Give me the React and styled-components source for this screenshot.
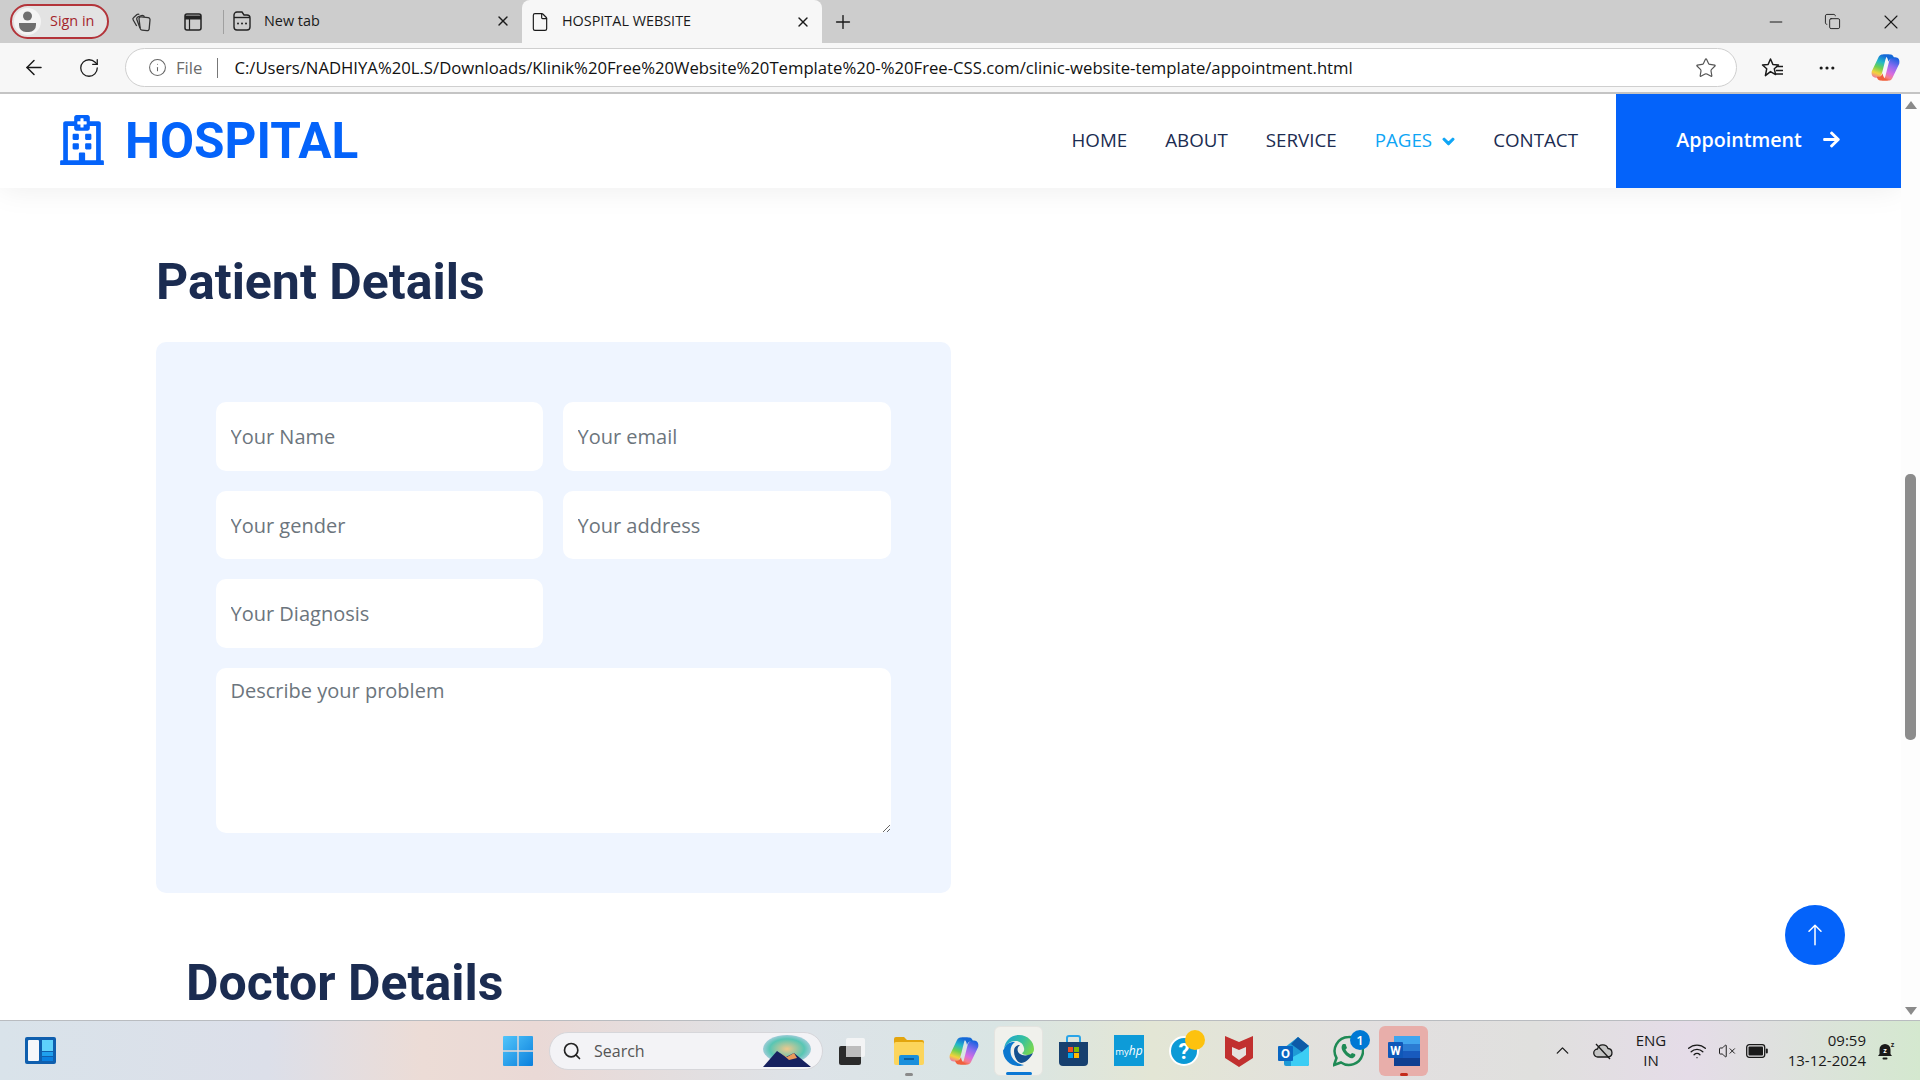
import React from "react";
import styled, { createGlobalStyle } from "styled-components";
import {
  ArrowLeft,
  ChevronUp,
  Info,
  Minus,
  MoreHorizontal,
  Plus,
  RotateCw,
  Search,
  Star,
  VolumeX,
  Wifi,
  X,
  Copy,
  File,
} from "lucide-react";
import { FaArrowRight, FaChevronDown, FaRegHospital } from "react-icons/fa";
import { BsArrowUp } from "react-icons/bs";

const GlobalStyle = createGlobalStyle`
  html, body {
    margin: 0;
    padding: 0;
    height: 100%;
    overflow: hidden;
    background: #fff;
  }
  * { box-sizing: border-box; }
`;

const Screen = styled.div`
  width: 1920px;
  height: 1080px;
  display: flex;
  flex-direction: column;
  overflow: hidden;
  font-family: "Open Sans", sans-serif;
`;

/* browser chrome */
const TabStrip = styled.div`
  height: 43px;
  flex: none;
  background: #cdcdcd;
  display: flex;
  align-items: center;
  padding-left: 10px;
  color: #1a1a1a;
`;

const SignIn = styled.div`
  width: 99px;
  height: 35px;
  flex: none;
  border: 2px solid #b3343a;
  border-radius: 18px;
  background: #e3e3e3;
  display: flex;
  align-items: center;
  gap: 9px;
  padding: 0 0 0 2px;
  color: #a4262c;
  font-size: 14.4px;
  line-height: 1;
`;

const Avatar = styled.span`
  width: 27px;
  height: 27px;
  border-radius: 50%;
  background: #f4f4f4;
  display: flex;
  align-items: center;
  justify-content: center;
`;

const StripButton = styled.span`
  width: 42px;
  flex: none;
  display: flex;
  justify-content: center;
  margin-left: ${(p) => p.$gap || 0}px;
`;

const Divider = styled.span`
  width: 1px;
  height: 24px;
  flex: none;
  background: #a0a0a0;
  margin-left: 9px;
`;

const Tab = styled.div`
  height: ${(p) => (p.$active ? "43px" : "34px")};
  flex: none;
  width: ${(p) => (p.$active ? "300px" : "298px")};
  align-self: flex-end;
  margin-bottom: ${(p) => (p.$active ? "0" : "5px")};
  background: ${(p) => (p.$active ? "#f7f7f7" : "transparent")};
  border-radius: 8px 8px 0 0;
  display: flex;
  align-items: center;
  padding: 0 11px 0 ${(p) => (p.$active ? "8px" : "9px")};
  gap: ${(p) => (p.$active ? "12px" : "13px")};
  font-size: 14.4px;
  color: #1a1a1a;
`;

const TabTitle = styled.span`
  flex: 1;
  white-space: nowrap;
  position: relative;
  top: -1px;
`;

const WindowControls = styled.div`
  margin-left: auto;
  display: flex;
  align-items: center;
  gap: 38px;
  padding-right: 17px;
`;

const Toolbar = styled.div`
  height: 51px;
  flex: none;
  background: #f7f7f7;
  border-bottom: 2px solid #c4c4c4;
  display: flex;
  align-items: center;
  padding-left: 22px;
  color: #1a1a1a;
`;

const ToolButton = styled.span`
  flex: none;
  width: ${(p) => p.$w || 24}px;
  margin: 0 ${(p) => p.$mr || 0}px 0 ${(p) => p.$ml || 0}px;
  display: flex;
  justify-content: center;
`;

const AddressBar = styled.div`
  width: 1612px;
  height: 39px;
  flex: none;
  background: #fff;
  border: 1px solid #cfcfcf;
  border-radius: 20px;
  display: flex;
  align-items: center;
  padding: 0 19px 0 22px;
  font-size: 16.7px;
`;

const FileLabel = styled.span`
  color: #6b6b6b;
  margin-left: 9px;
`;

const AddressSep = styled.span`
  width: 1px;
  height: 20px;
  background: #777;
  margin: 0 16px 0 15px;
`;

const Url = styled.span`
  flex: 1;
  white-space: nowrap;
  color: #111;
`;

/* site */
const Viewport = styled.div`
  flex: 1;
  min-height: 0;
  display: flex;
  position: relative;
  background: #fff;
`;

const Page = styled.main`
  flex: 1;
  min-width: 0;
  overflow: hidden;
`;

const Navbar = styled.nav`
  height: 94px;
  display: flex;
  align-items: center;
  background: #fff;
  box-shadow: 0 0 30px rgba(0, 0, 0, 0.08);
  padding-left: 57px;
`;

const Brand = styled.a`
  display: flex;
  align-items: center;
  gap: 18px;
  color: #0463fa;
  font-family: Roboto, sans-serif;
  font-weight: 700;
  font-size: 49.5px;
  line-height: 1;
  margin-right: auto;
  padding-top: 1px;
`;

const BrandMark = styled(FaRegHospital)`
  position: relative;
  top: -2px;
`;

const NavLinks = styled.div`
  display: flex;
  align-items: center;
  gap: 38px;
  margin-right: 38px;
  padding-bottom: 3px;
`;

const NavLink = styled.a`
  display: flex;
  align-items: center;
  gap: 10px;
  font-size: 18.75px;
  font-weight: 500;
  color: ${(p) => (p.$active ? "#0ea5f5" : "#1b2c51")};
`;

const Chevron = styled(FaChevronDown)`
  position: relative;
  top: 2px;
  stroke: currentColor;
  stroke-width: 40px;
`;

const AppointmentButton = styled.a`
  width: 285px;
  height: 94px;
  flex: none;
  background: #0463fa;
  color: #fff;
  font-size: 19.7px;
  font-weight: 600;
  display: flex;
  align-items: center;
  justify-content: center;
  gap: 20px;
  padding-bottom: 4px;
`;

const Content = styled.div`
  padding: 64px 0 0 156px;
`;

const Heading = styled.h1`
  margin: ${(p) => (p.$doctor ? "60px 0 0 30px" : "0 0 30px")};
  color: #1b2c51;
  font-family: Roboto, sans-serif;
  font-weight: 700;
  font-size: 50px;
  line-height: 60px;
`;

const FormPanel = styled.form`
  width: 795px;
  padding: 60px;
  background: #eff5ff;
  border-radius: 10px;
`;

const FieldGrid = styled.div`
  display: grid;
  grid-template-columns: 327px 1fr;
  gap: 20px;
`;

const Field = styled.input`
  width: 100%;
  height: 68.7px;
  border: 0;
  outline: 0;
  background: #fff;
  border-radius: 10px;
  padding: 0 14.5px;
  font-family: "Open Sans", sans-serif;
  font-size: 20px;
  color: #6c757d;
  &::placeholder { color: #6c757d; opacity: 1; }
`;

const Problem = styled.textarea`
  display: block;
  grid-column: 1 / 3;
  width: 100%;
  height: 165px;
  border: 0;
  outline: 0;
  background: #fff;
  border-radius: 10px;
  padding: 8px 14.5px;
  resize: vertical;
  font-family: "Open Sans", sans-serif;
  font-size: 20px;
  line-height: 30px;
  &::placeholder { color: #6c757d; opacity: 1; }
`;

const BackToTop = styled.a`
  position: absolute;
  left: 1785px;
  top: 811px;
  width: 60px;
  height: 60px;
  border-radius: 50%;
  background: #0463fa;
  color: #fff;
  display: flex;
  align-items: center;
  justify-content: center;
`;

const Scrollbar = styled.div`
  width: 19px;
  flex: none;
  background: #fdfdfd;
  display: flex;
  flex-direction: column;
  align-items: center;
  padding: 7px 0 5px;
`;

const ScrollArrow = styled.span`
  width: 0;
  height: 0;
  border-left: 6px solid transparent;
  border-right: 6px solid transparent;
  ${(p) => (p.$down ? "border-top" : "border-bottom")}: 8px solid #8a8a8a;
`;

const ScrollThumb = styled.span`
  width: 11px;
  height: 266px;
  border-radius: 5px;
  background: #8c8c8c;
  margin: 365px 0 auto;
`;

/* taskbar */
const Taskbar = styled.footer`
  height: 60px;
  flex: none;
  border-top: 1px solid #b9bcc0;
  background: linear-gradient(90deg, #d9e3ea 0%, #dcdfe9 14%, #ecdcd6 22%, #ead9d6 28%, #dde3e8 42%, #d9e5e4 52%, #e3e6d5 60%, #e2dfe0 72%, #e0e0de 80%, #e5dce8 88%, #d4e8cf 100%);
  display: flex;
  align-items: center;
  color: #1a1a1a;
`;

const WidgetSlot = styled.div`
  width: 490px;
  flex: none;
  padding-left: 25px;
  display: flex;
`;

const AppSlot = styled.div`
  width: ${(p) => p.$w || 55}px;
  height: 50px;
  flex: none;
  margin: 0 ${(p) => p.$inset || 0}px;
  position: relative;
  display: flex;
  align-items: center;
  justify-content: center;
  border-radius: 6px;
  background: ${(p) => p.$bg || "transparent"};
  border: ${(p) => (p.$framed ? "1px solid #e4e4e0" : "0")};
`;

const RunDot = styled.span`
  position: absolute;
  bottom: 0;
  left: 50%;
  transform: translateX(-50%);
  width: ${(p) => p.$w || 8}px;
  height: 3px;
  border-radius: 2px;
  background: ${(p) => p.$color};
`;

const SearchBox = styled.div`
  width: 274px;
  height: 38px;
  flex: none;
  margin: 0 0 0 4px;
  background: #f3f3f6;
  border: 1px solid #d6d6da;
  border-radius: 19px;
  display: flex;
  align-items: center;
  gap: 12px;
  padding: 0 9px 0 12px;
  font-size: 16px;
  color: #555;
`;

const SearchLabel = styled.span`
  flex: 1;
`;

const Badge = styled.span`
  position: absolute;
  top: 4px;
  right: 6px;
  width: 20px;
  height: 20px;
  border-radius: 50%;
  background: #0078d4;
  color: #fff;
  font-size: 13px;
  font-weight: 600;
  display: flex;
  align-items: center;
  justify-content: center;
`;

const Tray = styled.div`
  flex: 1;
  display: flex;
  align-items: center;
  font-size: 15px;
  line-height: 20px;
  padding-left: 116px;
`;

const TrayItem = styled.span`
  flex: none;
  width: ${(p) => p.$w}px;
  display: flex;
  justify-content: center;
  text-align: center;
`;

const Lang = styled.span`
  width: 44px;
  flex: none;
  text-align: center;
  margin-right: 9px;
  padding-bottom: 2px;
`;

const Clock = styled.span`
  width: 94px;
  flex: none;
  text-align: right;
  padding-bottom: 2px;
  white-space: nowrap;
`;

/* drawn icons */
const WidgetsIcon = () => (
  <svg width="31" height="27" viewBox="0 0 31 27">
    <rect width="31" height="27" rx="2" fill="#0f5fae" />
    <rect x="3" y="3" width="11" height="21" rx="1" fill="#f5f7fa" />
    <rect x="17" y="3" width="11" height="11" fill="#5ed1fb" />
    <rect x="17" y="15" width="11" height="4" fill="#1fa0ee" />
    <rect x="17" y="20" width="11" height="4" fill="#0a80e0" />
  </svg>
);

const WindowsIcon = () => (
  <svg width="30" height="30" viewBox="0 0 30 30">
    <defs>
      <linearGradient id="winA" x1="0" y1="0" x2="1" y2="1">
        <stop offset="0" stopColor="#52c5fa" />
        <stop offset="1" stopColor="#0a7fdc" />
      </linearGradient>
    </defs>
    <path d="M0 1a1 1 0 0 1 1-1h13.3v14.3H0zM15.7 0H29a1 1 0 0 1 1 1v13.3H15.7zM0 15.7h14.3V30H1a1 1 0 0 1-1-1zM15.7 15.7H30V29a1 1 0 0 1-1 1H15.7z" fill="url(#winA)" />
  </svg>
);

const SnipIcon = () => (
  <svg width="26" height="28" viewBox="0 0 26 28">
    <rect x="0" y="9" width="22" height="19" rx="2" fill="#2b2b2b" />
    <rect x="7" y="1" width="19" height="19" rx="2" fill="#f7f7f7" opacity="0.85" />
    <rect x="7" y="9" width="15" height="11" fill="#bdbdbd" />
  </svg>
);

const ExplorerIcon = () => (
  <svg width="30" height="29" viewBox="0 0 30 29">
    <path d="M0 3a2 2 0 0 1 2-2h8l3 3h15a2 2 0 0 1 2 2v3H0z" fill="#e3a50e" />
    <rect y="6" width="30" height="23" rx="2" fill="#fcd55c" />
    <path d="M5 21a2 2 0 0 1 2-2h16a2 2 0 0 1 2 2v8H5z" fill="#1a8fdc" />
    <rect x="10" y="22" width="10" height="2" fill="#0c5f9e" />
  </svg>
);

const CopilotIcon = ({ id, size = 30 }) => (
  <svg width={size} height={size} viewBox="0 0 30 29">
    <defs>
      <linearGradient id={`${id}a`} x1="0.5" y1="0" x2="0.2" y2="1">
        <stop offset="0" stopColor="#1468d8" />
        <stop offset="0.3" stopColor="#22b8c8" />
        <stop offset="0.55" stopColor="#6ed050" />
        <stop offset="0.8" stopColor="#f4d33c" />
        <stop offset="1" stopColor="#ee7aa0" />
      </linearGradient>
      <linearGradient id={`${id}b`} x1="0.7" y1="0" x2="0.3" y2="1">
        <stop offset="0" stopColor="#1b62e0" />
        <stop offset="0.35" stopColor="#8a6cf0" />
        <stop offset="0.65" stopColor="#d86ce0" />
        <stop offset="0.85" stopColor="#f5808c" />
        <stop offset="1" stopColor="#f05a30" />
      </linearGradient>
    </defs>
    <path d="M8 3.5C9 1.5 10.5 1 12.5 1H21c-3.5 0-5 1.5-6 5l-3.5 14c-.7 3-2.5 5-5.500 5H5c-3.500 0-5-3-4.200-6.500z" fill={`url(#${id}a)`} />
    <path d="M22 25.500c-1 2-2.500 2.500-4.500 2.500H9c3.500 0 5-1.500 6-5l3.500-14C19.200 6 21 4 24 4h1c3.500 0 5 3 4.200 6.500z" fill={`url(#${id}b)`} />
    <path d="M12 1h8c2.500 0 3.500 2 4 4-3-.7-5 .5-6 3.500C17.500 4 15 2 12 1z" fill="#1468d8" />
    <path d="M18 28h-8c-2.500 0-3.500-2-4-4 3 .7 5-.5 6-3.500.5 4.500 3 6.500 6 7.500z" fill="#f0603c" />
  </svg>
);

const EdgeIcon = () => (
  <svg width="31" height="31" viewBox="0 0 31 31">
    <defs>
      <linearGradient id="edgeA" x1="0" y1="0.2" x2="1" y2="0.6">
        <stop offset="0" stopColor="#1ca4d0" />
        <stop offset="0.55" stopColor="#35c0a0" />
        <stop offset="1" stopColor="#78d850" />
      </linearGradient>
    </defs>
    <path d="M1 14C2 6 8 0 16 0c9 0 15 7 15 14 0 4-3 6-7 6-3 0-4.500-1-5-2 2-1 2.500-3 2-5-1-5-5-7-8-7C7 6 3 9 1 14z" fill="url(#edgeA)" />
    <path d="M1 14C3 9 7 6.500 12 7c-3 2-4.500 5-4.500 9 0 7 5.500 13 13.500 14-2 .7-3.500 1-5.500 1C7 31 0 24 0 15.500z" fill="#0c78cf" />
    <path d="M11 16c0-4 2.500-6 6-6-3 2-3.500 6.500 0 9 3 2 8 2 13-1-3 6-8 10-12 10-4-1-7-6-7-12z" fill="#14508f" />
  </svg>
);

const StoreIcon = () => (
  <svg width="29" height="31" viewBox="0 0 29 31">
    <path d="M8 7V3a2 2 0 0 1 2-2h9a2 2 0 0 1 2 2v4" fill="none" stroke="#2aa4e8" strokeWidth="2" />
    <path d="M0 7h29v20a4 4 0 0 1-4 4H4a4 4 0 0 1-4-4z" fill="#17406f" />
    <rect x="9" y="12" width="5" height="5" fill="#f25022" />
    <rect x="15" y="12" width="5" height="5" fill="#7fba00" />
    <rect x="9" y="18" width="5" height="5" fill="#00a4ef" />
    <rect x="15" y="18" width="5" height="5" fill="#ffb900" />
  </svg>
);

const MyHpIcon = () => (
  <svg width="30" height="31" viewBox="0 0 30 31">
    <rect width="30" height="31" fill="#0d9bd8" />
    <text x="15" y="20" textAnchor="middle" fill="#fff" fontFamily="Open Sans, sans-serif" fontSize="9.5">
      my
      <tspan fontStyle="italic" fontSize="12">hp</tspan>
    </text>
  </svg>
);

const HelpIcon = () => (
  <svg width="44" height="44" viewBox="0 0 44 44">
    <circle cx="22" cy="22" r="14" fill="#0c9ad6" stroke="#fff" strokeWidth="2" />
    <text x="22" y="30" textAnchor="middle" fill="#fff" fontFamily="Roboto, sans-serif" fontWeight="700" fontSize="22">?</text>
    <circle cx="33" cy="11" r="10" fill="#fdc20e" />
  </svg>
);

const McAfeeIcon = () => (
  <svg width="28" height="32" viewBox="0 0 28 32">
    <path d="M0 1l14 6 14-6v22L14 32 0 23z" fill="#c1302f" />
    <path d="M7 12l7 3 7-3v8l-7 5-7-5z" fill="#e5e2df" />
  </svg>
);

const OutlookIcon = () => (
  <svg width="31" height="30" viewBox="0 0 31 30">
    <path d="M6 12L20 1l11 9v18a2 2 0 0 1-2 2H8a2 2 0 0 1-2-2z" fill="#1e9ad6" />
    <path d="M13 8l7-7 11 9-7 6z" fill="#0d5aa7" />
    <path d="M13 22l11-6 7-6v18a2 2 0 0 1-2 2H13z" fill="#3ccdf4" />
    <rect y="10" width="15" height="15" rx="1" fill="#0a66c2" />
    <text x="7.5" y="22" textAnchor="middle" fill="#fff" fontFamily="Roboto, sans-serif" fontWeight="700" fontSize="13">O</text>
  </svg>
);

const WhatsAppIcon = () => (
  <svg width="31" height="32" viewBox="0 0 31 32">
    <path d="M15.5 2a14 14 0 0 0-12 21L1 30l7-2.5A14 14 0 1 0 15.5 2z" fill="none" stroke="#1f8a55" strokeWidth="2.5" />
    <path d="M10 9c-2 2-2 5 1 9s7 6 9 5 3-3 2-4l-3-1-1.500 1.500c-2-1-4-3-5-5L14 13l-1.500-4z" fill="#1f8a55" />
  </svg>
);

const WordIcon = () => (
  <svg width="32" height="30" viewBox="0 0 32 30">
    <rect x="6" y="0" width="26" height="8" fill="#41a5ee" />
    <rect x="6" y="8" width="26" height="7" fill="#2b7cd3" />
    <rect x="6" y="15" width="26" height="7" fill="#185abd" />
    <rect x="6" y="22" width="26" height="8" fill="#103f91" />
    <rect y="6" width="15" height="16" rx="1" fill="#0f57b8" />
    <text x="7.5" y="19" textAnchor="middle" fill="#fff" fontFamily="Roboto, sans-serif" fontWeight="700" fontSize="12">W</text>
  </svg>
);

const Landscape = () => (
  <svg width="52" height="32" viewBox="0 0 52 32">
    <defs>
      <radialGradient id="sky" cx="0.5" cy="0.5" r="0.6">
        <stop offset="0" stopColor="#f0c88c" />
        <stop offset="0.6" stopColor="#58c6b4" />
        <stop offset="1" stopColor="#d0d0f0" />
      </radialGradient>
    </defs>
    <ellipse cx="26" cy="14" rx="24" ry="14" fill="url(#sky)" />
    <path d="M2 32l14-16 9 6 8-4 17 14z" fill="#17215f" />
    <path d="M20 18l6 4 7-4 3 5-8 2z" fill="#e89a5c" />
  </svg>
);

const SnoozeBell = () => (
  <svg width="20" height="20" viewBox="0 0 20 20">
    <path d="M9 3a5.5 5.5 0 0 0-5.5 5.5V13L2 15h14l-1.500-2V8.500A5.500 5.500 0 0 0 9 3z" fill="#1a1a1a" />
    <rect x="6.5" y="16.5" width="5" height="2" rx="1" fill="#1a1a1a" />
    <text x="9" y="12" textAnchor="middle" fill="#fff" fontFamily="Roboto, sans-serif" fontWeight="700" fontSize="7">z</text>
    <text x="16.5" y="6" textAnchor="middle" fill="#1a1a1a" fontFamily="Roboto, sans-serif" fontWeight="700" fontSize="7">z</text>
  </svg>
);

const PersonIcon = () => (
  <svg width="19" height="21" viewBox="0 0 19 21">
    <circle cx="9.5" cy="5" r="4.5" fill="#6f6f6f" />
    <path d="M1 12h17v2a7 7 0 0 1-7 7H8a7 7 0 0 1-7-7z" fill="#6f6f6f" />
  </svg>
);

const NewTabIcon = () => (
  <svg width="18" height="20" viewBox="0 0 18 20" fill="none" stroke="#222" strokeWidth="1.4">
    <path d="M1 6V4a3 3 0 0 1 3-3h5l2 3h3a3 3 0 0 1 3 3v9a3 3 0 0 1-3 3H4a3 3 0 0 1-3-3z" />
    <path d="M1 6.5h16" />
    <path d="M5 12.5h.01M9 12.5h.01M13 12.5h.01" strokeWidth="2" strokeLinecap="round" />
  </svg>
);

const TabsIcon = () => (
  <svg width="20" height="20" viewBox="0 0 20 20" fill="none" stroke="#222" strokeWidth="1.5">
    <rect x="2" y="2" width="16" height="16" rx="2" />
    <path d="M2 5.500h16" strokeWidth="4" />
    <path d="M6.500 7v11" strokeWidth="1.2" />
  </svg>
);

const CollectionsIcon = () => (
  <svg width="22" height="20" viewBox="0 0 22 20" fill="none" stroke="#333" strokeWidth="1.3">
    <path d="M9 6.500a2 2 0 0 1 2.200-1.700l7 .8A2 2 0 0 1 20 7.800l-.8 9a2 2 0 0 1-2.200 1.900l-5-.5a2 2 0 0 1-1.800-1.700z" />
    <path d="M10 16L6.800 7.500a2 2 0 0 1 1.300-2.600L11.500 3.500a2 2 0 0 1 2 .3l1 1" />
    <path d="M6.700 14L3.200 8a2 2 0 0 1 .5-2.600L7 2.500a2 2 0 0 1 2.300 0" />
  </svg>
);

const FavoritesIcon = () => (
  <svg width="24" height="22" viewBox="0 0 24 22" fill="none" stroke="#1a1a1a" strokeWidth="1.5" strokeLinejoin="round">
    <path d="M9.500 2l2.400 5.500 5.600.5-4.200 3.800 1.300 5.800-5.100-3-5.100 4 1.300-6.800L1.500 8l5.600-.5z" />
    <path d="M15 9.500h7M15 13.500h7M15 17h7" />
  </svg>
);

const CloudMuted = () => (
  <svg width="22" height="20" viewBox="0 0 22 20" fill="#c4c4c4" stroke="#1a1a1a" strokeWidth="1.3">
    <path d="M6 16a4 4 0 0 1-.5-8A5.500 5.500 0 0 1 16 7.500 4.300 4.300 0 0 1 16.500 16z" />
    <path d="M4 3l14 15" fill="none" />
  </svg>
);

const BatteryIcon = () => (
  <svg width="22" height="14" viewBox="0 0 22 14">
    <rect x="0.7" y="0.7" width="18" height="12.6" rx="2.5" fill="none" stroke="#1a1a1a" strokeWidth="1.3" />
    <rect x="2.5" y="2.5" width="14.5" height="9" rx="1" fill="#1a1a1a" />
    <rect x="19.8" y="4.5" width="2" height="5" rx="1" fill="#1a1a1a" />
  </svg>
);

const apps = [
  { key: "explorer", node: <ExplorerIcon />, dot: "#8a8a8a" },
  { key: "copilot", node: <CopilotIcon id="taskCopilot" /> },
  { key: "edge", node: <EdgeIcon />, dot: "#0a78d4", dotW: 26, framed: true, bg: "#f0f1ec", w: 49, inset: 3 },
  { key: "store", node: <StoreIcon /> },
  { key: "myhp", node: <MyHpIcon /> },
  { key: "help", node: <HelpIcon /> },
  { key: "mcafee", node: <McAfeeIcon /> },
  { key: "outlook", node: <OutlookIcon /> },
  { key: "whatsapp", node: <WhatsAppIcon />, badge: "1" },
  { key: "word", node: <WordIcon />, dot: "#c42b1c", bg: "#e8aeaa", w: 49, inset: 3 },
];

const fields = ["Your Name", "Your email", "Your gender", "Your address", "Your Diagnosis"];
const navItems = ["HOME", "ABOUT", "SERVICE"];

const App = () => {
  return (
    <Screen>
      <GlobalStyle />
      <TabStrip>
        <SignIn>
          <Avatar>
            <PersonIcon />
          </Avatar>
          Sign in
        </SignIn>
        <StripButton $gap={11}>
          <CollectionsIcon />
        </StripButton>
        <StripButton $gap={10}>
          <TabsIcon />
        </StripButton>
        <Divider />
        <Tab>
          <NewTabIcon />
          <TabTitle>New tab</TabTitle>
          <X size={16} />
        </Tab>
        <Tab $active>
          <File size={20} strokeWidth={1.4} />
          <TabTitle>HOSPITAL WEBSITE</TabTitle>
          <X size={16} />
        </Tab>
        <StripButton>
          <Plus size={22} strokeWidth={1.5} />
        </StripButton>
        <WindowControls>
          <Minus size={20} strokeWidth={1.2} />
          <Copy size={17} strokeWidth={1.3} />
          <X size={24} strokeWidth={1.1} />
        </WindowControls>
      </TabStrip>
      <Toolbar>
        <ToolButton $mr={31}>
          <ArrowLeft size={25} strokeWidth={1.5} />
        </ToolButton>
        <ToolButton $mr={24}>
          <RotateCw size={22} strokeWidth={1.4} />
        </ToolButton>
        <AddressBar>
          <Info size={19} strokeWidth={1.3} color="#666" />
          <FileLabel>File</FileLabel>
          <AddressSep />
          <Url>C:/Users/NADHIYA%20L.S/Downloads/Klinik%20Free%20Website%20Template%20-%20Free-CSS.com/clinic-website-template/appointment.html</Url>
          <Star size={22} strokeWidth={1.3} color="#555" />
        </AddressBar>
        <ToolButton $w={26} $ml={23} $mr={29}>
          <FavoritesIcon />
        </ToolButton>
        <ToolButton $mr={32}>
          <MoreHorizontal size={20} strokeWidth={1.8} />
        </ToolButton>
        <CopilotIcon id="barCopilot" size={29} />
      </Toolbar>
      <Viewport>
        <Page>
          <Navbar>
            <Brand>
              <BrandMark size={50} />
              HOSPITAL
            </Brand>
            <NavLinks>
              {navItems.map((item) => (
                <NavLink key={item}>{item}</NavLink>
              ))}
              <NavLink $active>
                PAGES
                <Chevron size={13} />
              </NavLink>
              <NavLink>CONTACT</NavLink>
            </NavLinks>
            <AppointmentButton>
              Appointment
              <FaArrowRight size={19} />
            </AppointmentButton>
          </Navbar>
          <Content>
            <Heading>Patient Details</Heading>
            <FormPanel>
              <FieldGrid>
                {fields.map((f) => (
                  <Field key={f} placeholder={f} />
                ))}
                <Problem placeholder="Describe your problem" />
              </FieldGrid>
            </FormPanel>
            <Heading $doctor>Doctor Details</Heading>
          </Content>
        </Page>
        <Scrollbar>
          <ScrollArrow />
          <ScrollThumb />
          <ScrollArrow $down />
        </Scrollbar>
        <BackToTop>
          <BsArrowUp size={24} />
        </BackToTop>
      </Viewport>
      <Taskbar>
        <WidgetSlot>
          <WidgetsIcon />
        </WidgetSlot>
        <AppSlot>
          <WindowsIcon />
        </AppSlot>
        <SearchBox>
          <Search size={20} strokeWidth={2} color="#222" />
          <SearchLabel>Search</SearchLabel>
          <Landscape />
        </SearchBox>
        <AppSlot $w={58}>
          <SnipIcon />
        </AppSlot>
        {apps.map((a) => (
          <AppSlot key={a.key} $bg={a.bg} $framed={a.framed} $w={a.w} $inset={a.inset}>
            {a.node}
            {a.badge && <Badge>{a.badge}</Badge>}
            {a.dot && <RunDot $color={a.dot} $w={a.dotW} />}
          </AppSlot>
        ))}
        <Tray>
          <TrayItem $w={30}>
            <ChevronUp size={21} strokeWidth={1.5} />
          </TrayItem>
          <TrayItem $w={52}>
            <CloudMuted />
          </TrayItem>
          <Lang>
            ENG
            <br />
            IN
          </Lang>
          <TrayItem $w={30}>
            <Wifi size={20} strokeWidth={1.6} />
          </TrayItem>
          <TrayItem $w={30}>
            <VolumeX size={18} strokeWidth={1.3} />
          </TrayItem>
          <TrayItem $w={30}>
            <BatteryIcon />
          </TrayItem>
          <Clock>
            09:59
            <br />
            13-12-2024
          </Clock>
          <TrayItem $w={40}>
            <SnoozeBell />
          </TrayItem>
        </Tray>
      </Taskbar>
    </Screen>
  );
};

export default App;
